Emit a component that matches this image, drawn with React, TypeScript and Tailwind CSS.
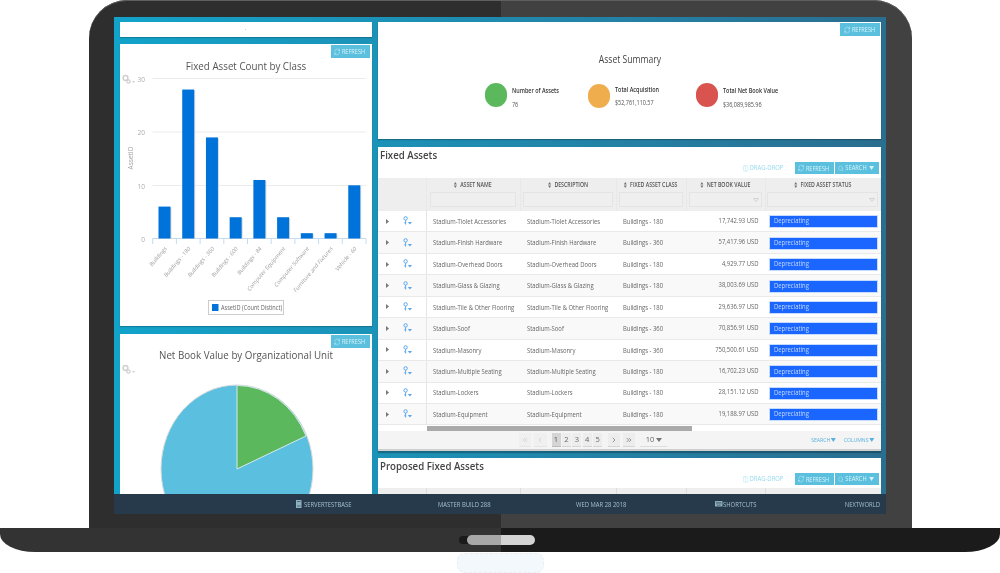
import type { ReactNode } from "react";
import { RefreshCw, Search, ChevronLeft, ChevronRight, ChevronsLeft, ChevronsRight, Columns2 } from "lucide-react";

const rows: [string, string, string][] = [
  ["Stadium-Tiolet Accessories", "Buildings - 180", "17,742.93 USD"],
  ["Stadium-Finish Hardware", "Buildings - 360", "57,417.96 USD"],
  ["Stadium-Overhead Doors", "Buildings - 180", "4,929.77 USD"],
  ["Stadium-Glass & Glazing", "Buildings - 180", "38,003.69 USD"],
  ["Stadium-Tile & Other Flooring", "Buildings - 180", "29,636.97 USD"],
  ["Stadium-Soof", "Buildings - 360", "70,856.91 USD"],
  ["Stadium-Masonry", "Buildings - 360", "750,500.61 USD"],
  ["Stadium-Multiple Seating", "Buildings - 180", "16,702.23 USD"],
  ["Stadium-Lockers", "Buildings - 180", "28,151.12 USD"],
  ["Stadium-Equipment", "Buildings - 180", "19,188.97 USD"],
];

const bars = [6, 28, 19, 4, 11, 4, 1, 1, 10];
const labels = ["Buildings", "Buildings - 180", "Buildings - 360", "Buildings - 600", "Buildings - 84", "Computer Equipment", "Computer Software", "Furniture and Fixtures", "Vehicle - 60"];
const gridCols = "grid grid-cols-[49px_94px_96px_70px_79px_115px]";
const sqLeft = "inline-block origin-left scale-x-[0.84] whitespace-nowrap";
const sqRight = "inline-block origin-right scale-x-[0.84] whitespace-nowrap";
const sqBlock = "block origin-left scale-x-[0.84] whitespace-nowrap";

function RefreshBtn({ className = "" }: { className?: string }) {
  return (
    <div className={`h-[13px] w-[39px] bg-[#5bc0de] flex items-center justify-center overflow-hidden text-[7px] leading-none text-[#d9f2f9] ${className}`}>
      <div className="flex items-center gap-[2px] shrink-0 scale-x-[0.8] whitespace-nowrap">
        <RefreshCw size={8} strokeWidth={1.4} />
        <span>REFRESH</span>
      </div>
    </div>
  );
}

function Caret({ className = "" }: { className?: string }) {
  return (
    <svg width="6" height="4" viewBox="0 0 6 4" className={className}>
      <path d="M0 0 L6 0 L3 4 Z" fill="currentColor" />
    </svg>
  );
}

function Toolbar() {
  return (
    <div className="flex items-center justify-end h-[12px] pr-[2px] gap-[1px]">
      <div className="flex items-center gap-[1px] text-[7px] text-[#96d9ee] mr-[9px] w-[42px] justify-center">
        <div className="flex items-center gap-[1px] shrink-0 scale-x-[0.84] whitespace-nowrap">
          <Columns2 size={7} strokeWidth={1.4} />
          <span>DRAG-DROP</span>
        </div>
      </div>
      <RefreshBtn className="!h-[12px]" />
      <div className="h-[12px] w-[44px] bg-[#5bc0de] flex items-center justify-center overflow-hidden text-[7px] text-[#d9f2f9]">
        <div className="flex items-center gap-[2px] shrink-0 scale-x-[0.82] whitespace-nowrap">
          <Search size={7} strokeWidth={1.4} />
          <span>SEARCH</span>
          <Caret className="ml-[1px]" />
        </div>
      </div>
    </div>
  );
}

function HeadCell({ label, input, tri }: { label: string; input: string; tri?: boolean }) {
  return (
    <div className="bg-[#eeeeee] border-r border-[#e8e8e8] flex flex-col items-center">
      <div className="h-[14px] flex items-center gap-[4px] text-[6.5px] font-semibold text-[#555] scale-x-[0.8] whitespace-nowrap">
        <svg width="4" height="6" viewBox="0 0 4 6"><path d="M2 0 L4 2.4 L0 2.4 Z M2 6 L4 3.6 L0 3.6 Z" fill="#777" /></svg>
        <span>{label}</span>
      </div>
      <div className={`h-[15px] bg-[#efefef] border border-[#e4e4e4] flex items-center justify-end pr-[2px] ${input}`}>
        {tri && <svg width="6" height="4" viewBox="0 0 6 4"><path d="M0.5 0.5 L5.5 0.5 L3 3.5 Z" fill="none" stroke="#ccc" strokeWidth="0.8" /></svg>}
      </div>
    </div>
  );
}

function RowIcon() {
  return (
    <svg width="9" height="10" viewBox="0 0 9 10" fill="none" className="text-[#5aa6ee]">
      <circle cx="2.6" cy="2.4" r="1.7" stroke="currentColor" strokeWidth="1" />
      <path d="M2.6 4.2 V8.5 M2.6 6.8 H1.2" stroke="currentColor" strokeWidth="1" />
      <path d="M4.8 6 H9 L6.9 8.4 Z" fill="currentColor" />
    </svg>
  );
}

function Gear({ y }: { y: number }) {
  return (
    <g>
      <circle cx="125.5" cy={y} r="2.4" fill="none" stroke="#d0d0d0" strokeWidth="1.5" />
      <circle cx="128.5" cy={y + 3.5} r="1.7" fill="none" stroke="#d0d0d0" strokeWidth="1.2" />
      <path d={`M132 ${y + 3} L135 ${y + 3} L133.5 ${y + 5} Z`} fill="#d0d0d0" />
    </g>
  );
}

function BarChart() {
  return (
    <svg width="252" height="252" viewBox="120 74 252 252" className="block">
      <Gear y={78} />
      {[78.5, 132, 185.5].map((y) => (
        <line key={y} x1="152.5" x2="366" y1={y} y2={y} stroke="#ececec" />
      ))}
      <line x1="152.5" x2="366" y1="238.5" y2="238.5" stroke="#c6dcee" />
      {Array.from({ length: 10 }).map((_, i) => (
        <line key={i} x1={152.7 + i * 23.7} x2={152.7 + i * 23.7} y1="238.5" y2="244" stroke="#c6dcee" />
      ))}
      {[["30", 79], ["20", 132.5], ["10", 186], ["0", 239]].map(([t, y]) => (
        <text key={t as string} x="145" y={(y as number) + 2.5} textAnchor="end" fontSize="6.5" fill="#aaa" fontFamily="Open Sans">{t}</text>
      ))}
      <text transform="translate(133,158) rotate(-90)" textAnchor="middle" fontSize="6.5" fill="#a0a0a0" fontFamily="Open Sans">AssetID</text>
      {bars.map((v, i) => {
        const x = 158.5 + i * 23.72;
        const h = v * 5.32;
        return (
          <g key={i}>
            <rect x={x + 1} y={238.5 - h + 1} width="12" height={h - 1} fill="#d6d9de" />
            <rect x={x} y={238.5 - h} width="12" height={h} fill="#0073da" />
          </g>
        );
      })}
      {labels.map((l, i) => (
        <text
          key={l}
          transform={`translate(${167 + i * 23.72},249) scale(0.85,1) rotate(-45)`}
          textAnchor="end"
          fontSize="6"
          fill="#a0a0a0"
          fontFamily="Open Sans"
        >
          {l}
        </text>
      ))}
      <rect x="208.5" y="300.5" width="75" height="14" fill="#fff" stroke="#ccc" />
      <rect x="212" y="304" width="6.5" height="7" fill="#0073da" />
      <text transform="translate(221,310) scale(0.86,1)" fontSize="6.5" fill="#666" fontFamily="Open Sans">AssetID (Count Distinct)</text>
    </svg>
  );
}

function PieChart() {
  return (
    <svg width="252" height="132" viewBox="120 362 252 132" className="block">
      <Gear y={368} />
      <ellipse cx="237" cy="469" rx="76" ry="84" fill="#5bc0e0" stroke="#dcdcdc" strokeWidth="1" />
      <path d="M237 469 L237 385.4 A75.4 83.6 0 0 1 306 436 Z" fill="#5cb85c" stroke="#d5e8ee" strokeWidth="1" />
    </svg>
  );
}

function PagerBtn({ children, active, faded }: { children: ReactNode; active?: boolean; faded?: boolean }) {
  return (
    <div className={`h-[14px] flex items-center justify-center text-[7.5px] border-b ${active ? "bg-[#d5d5d5] border-[#bbb] text-[#555]" : faded ? "bg-[#f0f0f0] border-[#e4e4e4] text-[#c8c8c8]" : "bg-[#ededed] border-[#d5d5d5] text-[#666]"}`}>
      {children}
    </div>
  );
}

function Oval({ color }: { color: string }) {
  return <div className={`w-[22px] h-[24px] rounded-full shrink-0 ${color}`} />;
}

export default function App() {
  return (
    <div className="w-[1000px] h-[573px] bg-white overflow-hidden flex flex-col items-center font-['Open_Sans',sans-serif] blur-[0.35px]">
      <div className="w-[823px] h-[528px] shrink-0 rounded-t-[38px] bg-[linear-gradient(90deg,#2e2e2e_50.1%,#414141_50.1%)] shadow-[inset_0_1px_0_#5f5f5f] pt-[17px] pl-[25px] pr-[26px]">
        <div className="h-[497px] flex flex-col">
          <div className="h-[477px] overflow-hidden bg-[linear-gradient(90deg,#12a3ca,#1d8fb4_40%,#2a6e90)] pt-[5px] pl-[6px] pr-[5px] flex gap-[6px]">
            <div className="w-[252px] shrink-0 flex flex-col">
              <div className="h-[15px] shrink-0 bg-white shadow-[0_1px_1px_rgba(0,0,0,0.2)] flex items-center justify-center">
                <div className="w-[1px] h-[1px] bg-[#ccc]" />
              </div>
              <div className="h-[282px] mt-[7px] shrink-0 bg-white shadow-[0_1px_1px_rgba(0,0,0,0.2)] flex flex-col">
                <div className="flex justify-end pt-[1px] pr-[2px]"><RefreshBtn /></div>
                <div className="h-[16px] flex items-center justify-center text-[11.5px] text-[#555] leading-none scale-x-[0.85] whitespace-nowrap">Fixed Asset Count by Class</div>
                <BarChart />
              </div>
              <div className="h-[160px] mt-[8px] shrink-0 bg-white flex flex-col">
                <div className="flex justify-end pt-[1px] pr-[2px]"><RefreshBtn /></div>
                <div className="h-[14px] flex items-center justify-center text-[11.5px] text-[#555] leading-none scale-x-[0.85] whitespace-nowrap">Net Book Value by Organizational Unit</div>
                <PieChart />
              </div>
            </div>

            <div className="w-[503px] shrink-0 flex flex-col">
              <div className="h-[117px] shrink-0 bg-white shadow-[0_1px_1px_rgba(0,0,0,0.25)] flex flex-col">
                <div className="flex justify-end pr-[1px] pt-[1px]"><RefreshBtn className="!w-[40px]" /></div>
                <div className="mt-[16px] h-[14px] flex items-center justify-center pl-[1px] text-[10px] leading-none text-[#444] scale-x-[0.86] whitespace-nowrap">Asset Summary</div>
                <div className="flex mt-[17px] pl-[107px] text-[6.5px] leading-none text-[#333]">
                  <div className="flex w-[103px]">
                    <Oval color="bg-[#5cb85c]" />
                    <div className="ml-[5px] pt-[5px]"><div className={`font-semibold ${sqBlock}`}>Number of Assets</div><div className={`mt-[7px] text-[#555] ${sqBlock}`}>76</div></div>
                  </div>
                  <div className="flex w-[108px] mt-[1px]">
                    <Oval color="bg-[#f0ad4e]" />
                    <div className="ml-[5px] pt-[3px]"><div className={`font-semibold ${sqBlock}`}>Total Acquisition</div><div className={`mt-[6.5px] text-[#555] ${sqBlock}`}>$52,761,110.57</div></div>
                  </div>
                  <div className="flex">
                    <Oval color="bg-[#d9534f]" />
                    <div className="ml-[5px] pt-[5px]"><div className={`font-semibold ${sqBlock}`}>Total Net Book Value</div><div className={`mt-[7.5px] text-[#555] ${sqBlock}`}>$36,089,985.96</div></div>
                  </div>
                </div>
              </div>

              <div className="h-[304px] mt-[8px] shrink-0 bg-white shadow-[0_2px_1px_rgba(0,0,0,0.25)] flex flex-col">
                <div className="h-[15px] pl-[2px] flex items-center text-[11.5px] font-semibold text-[#444] leading-none"><span className={sqLeft}>Fixed Assets</span></div>
                <Toolbar />
                <div className="h-[4px]" />
                <div className={`${gridCols} h-[33px]`}>
                  <div className="bg-[#eeeeee] border-r border-[#e8e8e8]" />
                  <HeadCell label="ASSET NAME" input="w-[86px]" />
                  <HeadCell label="DESCRIPTION" input="w-[90px]" />
                  <HeadCell label="FIXED ASSET CLASS" input="w-[64px]" />
                  <HeadCell label="NET BOOK VALUE" input="w-[73px]" tri />
                  <HeadCell label="FIXED ASSET STATUS" input="w-[111px]" tri />
                </div>
                <div className="h-[215px] flex flex-col">
                  {rows.map(([name, cls, val], i) => (
                    <div key={name} className={`${gridCols} h-[21.45px] shrink-0 items-center text-[7px] text-[#666] border-b border-[#e9e9e9] ${i % 2 ? "bg-[#f9f9f9]" : "bg-white"}`}>
                      <div className="h-full flex items-center border-r border-[#e6e6e6] pl-[8px] gap-[14px]">
                        <svg width="3" height="5" viewBox="0 0 3 5"><path d="M0 0 L3 2.5 L0 5 Z" fill="#777" /></svg>
                        <RowIcon />
                      </div>
                      <div className="pl-[6px] pt-[2px]"><span className={sqLeft}>{name}</span></div>
                      <div className="pl-[6px] pt-[2px]"><span className={sqLeft}>{name}</span></div>
                      <div className="pl-[6px] pt-[2px]"><span className={sqLeft}>{cls}</span></div>
                      <div className="text-right pr-[7px]"><span className={sqRight}>{val}</span></div>
                      <div className="pl-[3px] pr-[3px] pt-[1px]">
                        <div className="h-[13px] bg-[#1a66ff] pl-[4px] flex items-center text-[#c5d9ff] border border-[#c5dcff]"><span className={sqLeft}>Depreciating</span></div>
                      </div>
                    </div>
                  ))}
                </div>
                <div className="h-[5px] shrink-0 pl-[49px] bg-white"><div className="h-full w-[265px] bg-[#aaaaaa]" /></div>
                <div className="flex-1 bg-[#f4f4f4] border-b-2 border-[#cfcfcf] flex items-center pl-[141px]">
                  <div className="w-[12px] mr-[3px]"><PagerBtn faded><ChevronsLeft size={8} /></PagerBtn></div>
                  <div className="w-[13px] mr-[5px]"><PagerBtn faded><ChevronLeft size={8} /></PagerBtn></div>
                  {["1", "2", "3", "4", "5"].map((n, i) => (
                    <div key={n} className="w-[9px] mr-[1.4px]"><PagerBtn active={i === 0}>{n}</PagerBtn></div>
                  ))}
                  <div className="w-[12px] ml-[5px] mr-[3px]"><PagerBtn><ChevronRight size={8} /></PagerBtn></div>
                  <div className="w-[12px] mr-[5px]"><PagerBtn><ChevronsRight size={8} /></PagerBtn></div>
                  <div className="w-[27px] h-[14px] border-b border-[#ddd] flex items-center justify-center gap-[2px] text-[7.5px] text-[#666]">10 <Caret className="text-[#777]" /></div>
                  <div className="ml-auto flex items-center gap-[3px] pr-[3px] text-[6px] text-[#58b0e0]">
                    <span className="flex items-center gap-[1px] scale-x-[0.85] whitespace-nowrap">SEARCH <Caret /></span>
                    <span className="flex items-center gap-[1px] scale-x-[0.85] whitespace-nowrap">COLUMNS <Caret /></span>
                  </div>
                </div>
              </div>

              <div className="h-[40px] mt-[7px] shrink-0 bg-white flex flex-col">
                <div className="h-[15px] pl-[2px] flex items-center text-[11.5px] font-semibold text-[#444] leading-none"><span className={sqLeft}>Proposed Fixed Assets</span></div>
                <Toolbar />
                <div className="h-[3px]" />
                <div className={`${gridCols} h-[8px]`}>
                  <div className="bg-[#eeeeee] border-r border-[#ddd]" />
                  <div className="bg-[#eeeeee] border-r border-[#ddd]" />
                  <div className="bg-[#eeeeee] border-r border-[#ddd]" />
                  <div className="bg-[#eeeeee] border-r border-[#ddd]" />
                  <div className="bg-[#eeeeee] border-r border-[#ddd]" />
                  <div className="bg-[#eeeeee]" />
                </div>
              </div>
            </div>
          </div>
          <div className="h-[20px] shrink-0 bg-[#263a4b] flex items-center text-[7px] text-[#a5c0cf] leading-none whitespace-nowrap">
            <div className="w-[181px] shrink-0" />
            <svg width="9" height="8" viewBox="0 0 9 8" className="shrink-0"><rect x="1" y="0" width="5.5" height="8" fill="#8fb0c0" /><path d="M2 1.5 H5.5 M2 6 H5.5" stroke="#263a4b" strokeWidth="0.6" /></svg>
            <div className="w-[134px] shrink-0"><span className={sqLeft}>SERVERTESTBASE</span></div>
            <div className="w-[138px] shrink-0"><span className={sqLeft}>MASTER BUILD 288</span></div>
            <div className="w-[139px] shrink-0"><span className={sqLeft}>WED MAR 28 2018</span></div>
            <svg width="8" height="6" viewBox="0 0 8 6" className="shrink-0"><rect width="7.5" height="5.5" rx="0.6" fill="#8fb0c0" /><path d="M1 1.4 H6.5 M1 2.8 H6.5 M2 4.3 H5.5" stroke="#263a4b" strokeWidth="0.5" /></svg>
            <div><span className={sqLeft}>SHORTCUTS</span></div>
            <div className="ml-auto pr-[5px]"><span className={sqRight}>NEXTWORLD</span></div>
          </div>
        </div>
      </div>
      <div className="w-[1000px] h-[24px] shrink-0 rounded-b-[35px_18px] bg-[linear-gradient(90deg,#333333_50.1%,#1b1b1b_50.1%)] flex items-center justify-center pl-[2px]">
        <div className="w-[68px] h-[10px] rounded-full bg-[linear-gradient(90deg,#a8a8a8_50%,#d4d4d4_50%)] shadow-[-9px_0_0_-1px_#1a1a1a]" />
      </div>
      <div className="mt-[1px] w-[87px] h-[20px] shrink-0 rounded-[8px] bg-[#f3f8fd] border border-dashed border-[#e8eef4]" />
    </div>
  );
}
